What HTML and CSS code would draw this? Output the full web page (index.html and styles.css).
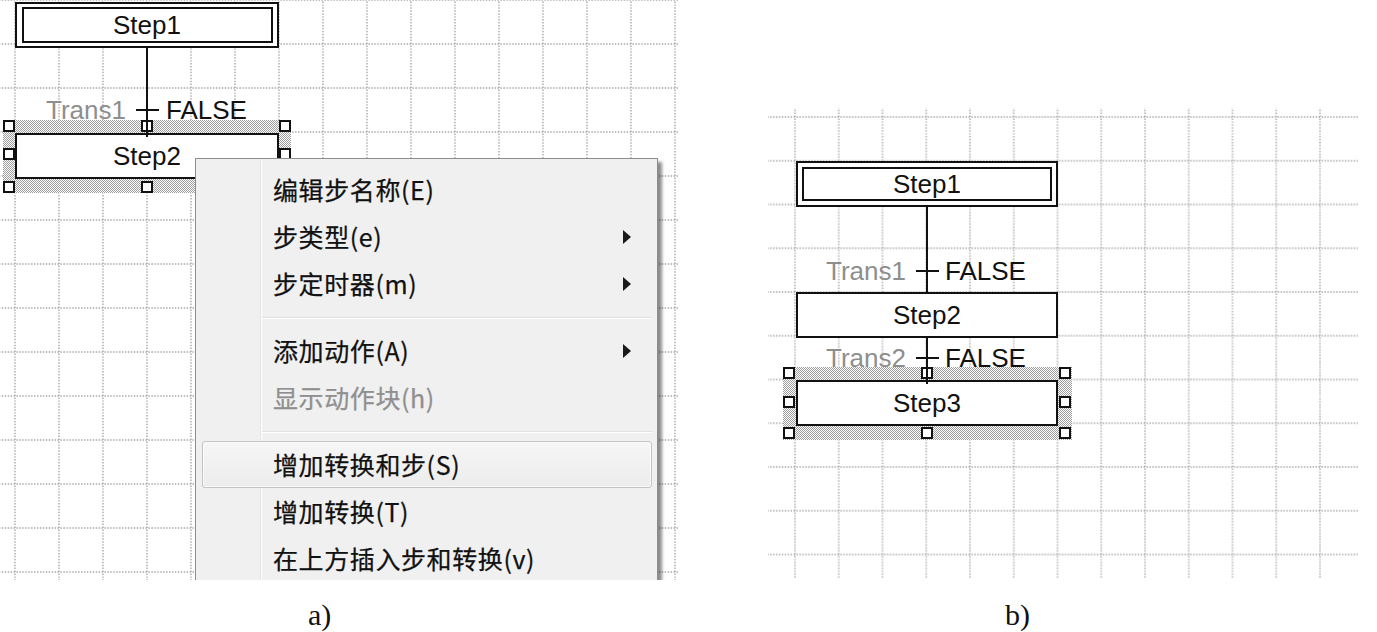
FILE: index.html
```html
<!DOCTYPE html>
<html lang="zh-CN">
<head>
<meta charset="utf-8">
<title>SFC</title>
<link rel="stylesheet" href="styles.css">
</head>
<body>
<main class="plate">
  <div class="canvas canvas-a">
    <svg class="diagram" width="678" height="580" viewBox="0 0 678 580">
      <defs>
        <pattern id="grid-a" class="grid-a" patternUnits="userSpaceOnUse" x="-7" y="-22" width="44" height="44">
          <line class="grid-line" x1="22" y1="0" x2="22" y2="44"/>
          <line class="grid-line" x1="0" y1="22" x2="44" y2="22"/>
        </pattern>
        <pattern id="hatch-a" patternUnits="userSpaceOnUse" width="2" height="2">
          <rect class="hatch-bg" width="2" height="2"/>
          <rect class="hatch-dot" width="1" height="1"/>
          <rect class="hatch-dot" x="1" y="1" width="1" height="1"/>
        </pattern>
      </defs>
      <rect class="grid-fill-a" width="678" height="580"/>
      <rect class="band-a" x="3" y="120" width="288" height="73"/>
      <rect class="box" x="16" y="3" width="262" height="44"/>
      <rect class="box" x="23" y="8" width="249" height="34"/>
      <text class="step-label" x="147" y="34">Step1</text>
      <line class="link" x1="147" y1="47" x2="147" y2="137"/>
      <line class="link" x1="136" y1="110" x2="159" y2="110"/>
      <text class="trans-name" x="126" y="119">Trans1</text>
      <text class="trans-cond" x="166" y="119">FALSE</text>
      <rect class="box" x="16" y="134" width="262" height="44"/>
      <text class="step-label" x="147" y="165">Step2</text>
      <rect class="handle" x="4" y="121" width="10" height="10"/>
      <rect class="handle" x="142" y="121" width="10" height="10"/>
      <rect class="handle" x="280" y="121" width="10" height="10"/>
      <rect class="handle" x="4" y="149" width="10" height="10"/>
      <rect class="handle" x="280" y="149" width="10" height="10"/>
      <rect class="handle" x="4" y="182" width="10" height="10"/>
      <rect class="handle" x="142" y="182" width="10" height="10"/>
      <rect class="handle" x="280" y="182" width="10" height="10"/>
      <line class="link" x1="147" y1="121" x2="147" y2="137"/>
    </svg>
    <ul class="menu">
      <li class="menu-item">编辑步名称(E)</li>
      <li class="menu-item">步类型(e)<span class="sub-arrow"></span></li>
      <li class="menu-item">步定时器(m)<span class="sub-arrow"></span></li>
      <li class="menu-sep"></li>
      <li class="menu-item">添加动作(A)<span class="sub-arrow"></span></li>
      <li class="menu-item is-disabled">显示动作块(h)</li>
      <li class="menu-sep"></li>
      <li class="menu-item is-hover">增加转换和步(S)</li>
      <li class="menu-item">增加转换(T)</li>
      <li class="menu-item">在上方插入步和转换(v)</li>
    </ul>
  </div>

  <div class="canvas canvas-b">
    <svg class="diagram" width="590" height="470" viewBox="768 108 590 470">
      <defs>
        <pattern id="grid-b" class="grid-b" patternUnits="userSpaceOnUse" x="773.125" y="95.125" width="43.75" height="43.75">
          <line class="grid-line" x1="21.875" y1="0" x2="21.875" y2="43.75"/>
          <line class="grid-line" x1="0" y1="21.875" x2="43.75" y2="21.875"/>
        </pattern>
        <pattern id="hatch-b" patternUnits="userSpaceOnUse" width="2" height="2">
          <rect class="hatch-bg" width="2" height="2"/>
          <rect class="hatch-dot" width="1" height="1"/>
          <rect class="hatch-dot" x="1" y="1" width="1" height="1"/>
        </pattern>
      </defs>
      <rect class="grid-fill-b" x="768" y="108" width="590" height="470"/>
      <rect class="box" x="797" y="162" width="260" height="44"/>
      <rect class="box" x="803" y="168" width="248" height="32"/>
      <text class="step-label" x="927" y="193">Step1</text>
      <line class="link" x1="927" y1="206" x2="927" y2="293"/>
      <line class="link" x1="916" y1="271" x2="939" y2="271"/>
      <text class="trans-name" x="906" y="280">Trans1</text>
      <text class="trans-cond" x="945" y="280">FALSE</text>
      <rect class="box" x="797" y="293" width="260" height="44"/>
      <text class="step-label" x="927" y="324">Step2</text>
      <rect class="band-b" x="783" y="367" width="289" height="73"/>
      <line class="link" x1="927" y1="337" x2="927" y2="381"/>
      <line class="link" x1="916" y1="358" x2="939" y2="358"/>
      <text class="trans-name" x="906" y="367">Trans2</text>
      <text class="trans-cond" x="945" y="367">FALSE</text>
      <rect class="box" x="797" y="381" width="260" height="44"/>
      <text class="step-label" x="927" y="412">Step3</text>
      <rect class="handle" x="784" y="368" width="10" height="10"/>
      <rect class="handle" x="922" y="368" width="10" height="10"/>
      <rect class="handle" x="1060" y="368" width="10" height="10"/>
      <rect class="handle" x="784" y="397" width="10" height="10"/>
      <rect class="handle" x="1060" y="397" width="10" height="10"/>
      <rect class="handle" x="784" y="428" width="10" height="10"/>
      <rect class="handle" x="922" y="428" width="10" height="10"/>
      <rect class="handle" x="1060" y="428" width="10" height="10"/>
      <line class="link" x1="927" y1="368" x2="927" y2="384"/>
    </svg>
  </div>

  <p class="caption caption-a">a)</p>
  <p class="caption caption-b">b)</p>
</main>
</body>
</html>
```

FILE: styles.css
```css
html, body {
  margin: 0;
  padding: 0;
  background: #ffffff;
}

.plate {
  display: grid;
  grid-template-columns: 678px 590px;
  grid-template-rows: 580px auto;
  column-gap: 90px;
  row-gap: 18px;
}

.canvas {
  position: relative;
  overflow: hidden;
}

.canvas-a {
  width: 678px;
  height: 580px;
}

.canvas-b {
  width: 590px;
  height: 470px;
  align-self: start;
  margin-top: 108px;
}

.diagram {
  display: block;
}

/* grid */
.grid-line {
  stroke: #a9a9a9;
  stroke-width: 1.4;
  fill: none;
}

.grid-a .grid-line {
  stroke-dasharray: 1.4667 1.4667;
}

.grid-b .grid-line {
  stroke-dasharray: 1.4583 1.4583;
}

.grid-fill-a {
  fill: url(#grid-a);
}

.grid-fill-b {
  fill: url(#grid-b);
}

/* selection hatch */
.hatch-bg {
  fill: #ffffff;
}

.hatch-dot {
  fill: #9c9c9c;
}

.band-a {
  fill: url(#hatch-a);
}

.band-b {
  fill: url(#hatch-b);
}

/* steps */
.box {
  fill: #ffffff;
  stroke: #111111;
  stroke-width: 2;
}

.handle {
  fill: #ffffff;
  stroke: #111111;
  stroke-width: 2;
}

.link {
  stroke: #111111;
  stroke-width: 2;
}

.step-label,
.trans-name,
.trans-cond {
  font-family: "Liberation Sans", Arial, sans-serif;
  font-size: 26px;
}

.step-label {
  fill: #111111;
  text-anchor: middle;
}

.trans-name {
  fill: #8e8e8e;
  text-anchor: end;
}

.trans-cond {
  fill: #111111;
}

/* context menu */
.menu {
  position: absolute;
  left: 195px;
  top: 158px;
  width: 461px;
  height: 440px;
  margin: 0;
  padding: 7px 0 0;
  list-style: none;
  border: 1px solid #8d8d8d;
  background: linear-gradient(to right, #f0f0f0 64px, #e2e3e3 64px, #e2e3e3 65px, #ffffff 65px, #ffffff 66px, #f0f0f0 66px);
  box-shadow: 4px 4px 3px rgba(0, 0, 0, 0.45);
  font-family: "Noto Sans CJK SC", "Noto Sans", sans-serif;
  font-size: 25px;
  letter-spacing: 0.6px;
  color: #111111;
}

.menu-item {
  display: flex;
  align-items: center;
  height: 47px;
  box-sizing: border-box;
  margin: 0 5px 0 6px;
  padding: 0 20px 0 70px;
  border: 1px solid transparent;
  border-radius: 3px;
  line-height: 1;
  -webkit-text-stroke: 0.25px currentColor;
}

.menu-item.is-hover {
  border-color: #c4c4c4;
  background: linear-gradient(#f6f6f6, #ececec);
  box-shadow: inset 0 0 0 1px rgba(255, 255, 255, 0.7);
}

.menu-item.is-disabled {
  color: #8f8f8f;
}

.sub-arrow {
  margin-left: auto;
  width: 0;
  height: 0;
  border-left: 8px solid #1a1a1a;
  border-top: 7px solid transparent;
  border-bottom: 7px solid transparent;
}

.menu-sep {
  height: 1px;
  margin: 10px 5px 8px 66px;
  background: #e0e0e0;
  border-bottom: 1px solid #ffffff;
}

/* captions */
.caption {
  margin: 0;
  font-family: "Liberation Serif", "Times New Roman", serif;
  font-size: 30px;
  line-height: 34px;
  color: #111111;
}

.caption-a {
  padding-left: 308px;
}

.caption-b {
  padding-left: 237px;
}
```
